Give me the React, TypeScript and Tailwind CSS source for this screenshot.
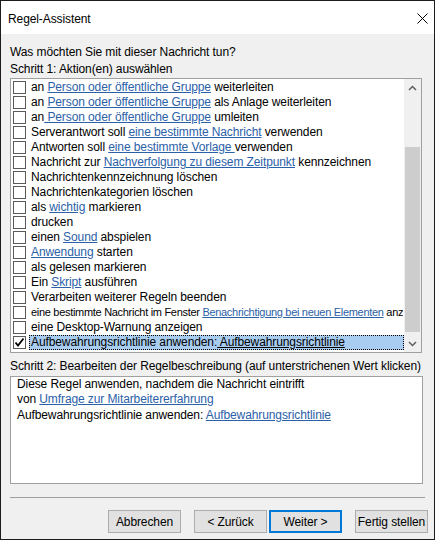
import type { ReactNode } from "react"

type Part = string | { link: string }

const rows: Part[][] = [
  ["an ", { link: "Person oder öffentliche Gruppe" }, " weiterleiten"],
  ["an ", { link: "Person oder öffentliche Gruppe" }, " als Anlage weiterleiten"],
  ["an", { link: " Person oder öffentliche Gruppe" }, " umleiten"],
  ["Serverantwort soll ", { link: "eine bestimmte Nachricht" }, " verwenden"],
  ["Antworten soll ", { link: "eine bestimmte Vorlage " }, "verwenden"],
  ["Nachricht zur ", { link: "Nachverfolgung zu diesem Zeitpunkt" }, " kennzeichnen"],
  ["Nachrichtenkennzeichnung löschen"],
  ["Nachrichtenkategorien löschen"],
  ["als ", { link: "wichtig" }, " markieren"],
  ["drucken"],
  ["einen ", { link: "Sound" }, " abspielen"],
  [{ link: "Anwendung" }, " starten"],
  ["als gelesen markieren"],
  ["Ein ", { link: "Skript" }, " ausführen"],
  ["Verarbeiten weiterer Regeln beenden"],
  ["eine bestimmte Nachricht im Fenster ", { link: "Benachrichtigung bei neuen Elementen" }, " anzeigen"],
  ["eine Desktop-Warnung anzeigen"],
  ["Aufbewahrungsrichtlinie anwenden:", { link: " Aufbewahrungsrichtlinie" }],
]

// row 15 is drawn condensed in the original dialog
const condensed = 15

function Text({ parts, selected }: { parts: Part[]; selected?: boolean }) {
  return (
    <>
      {parts.map((p, i) =>
        typeof p === "string" ? (
          <span key={i}>{p}</span>
        ) : (
          <span key={i} className={selected ? "underline text-black" : "underline text-[#2b61a8]"}>
            {p.link}
          </span>
        )
      )}
    </>
  )
}

function Checkbox({ checked }: { checked?: boolean }) {
  return (
    <div className="w-[13px] h-[13px] shrink-0 border border-[#5a5a5a] bg-white flex items-center justify-center">
      {checked && (
        <svg width="11" height="11" viewBox="0 0 11 11">
          <path d="M1.5 5.5 L4 8.5 L9.5 1.5" fill="none" stroke="#000" strokeWidth="1.8" />
        </svg>
      )}
    </div>
  )
}

function Button({ children, primary }: { children: ReactNode; primary?: boolean }) {
  return (
    <button
      className={
        "w-[73px] h-[23px] bg-[#e1e1e1] text-[12px] text-black whitespace-nowrap flex items-center justify-center " +
        (primary ? "border-2 border-[#0078d7]" : "border border-[#adadad]")
      }
    >
      {children}
    </button>
  )
}

function Chevron({ up }: { up?: boolean }) {
  return (
    <svg width="9" height="6" viewBox="0 0 9 6">
      <path
        d={up ? "M1 5 L4.5 1.5 L8 5" : "M1 1 L4.5 4.5 L8 1"}
        fill="none"
        stroke="#606060"
        strokeWidth="1.5"
      />
    </svg>
  )
}

export default function App() {
  return (
    <div
      className="w-[435px] h-[540px] border border-[#1c1c1c] bg-[#f0f0f0] flex flex-col text-[12px] tracking-[-0.1px] text-black whitespace-nowrap"
      style={{ fontFamily: '"Liberation Sans", Arial, sans-serif' }}
    >
      <div className="h-[33px] bg-white flex items-center justify-between pl-[7px] pr-[6px] pt-[2px] shrink-0">
        <span className="text-[12px]">Regel-Assistent</span>
        <svg width="11" height="11" viewBox="0 0 11 11">
          <path d="M0.5 0.5 L10.5 10.5 M10.5 0.5 L0.5 10.5" stroke="#000" strokeWidth="1" />
        </svg>
      </div>

      <div className="px-[9px] pt-[9px] flex flex-col">
        <div className="h-[18px] leading-[18px]">Was möchten Sie mit dieser Nachricht tun?</div>
        <div className="h-[17px] leading-[17px]">Schritt 1: Aktion(en) auswählen</div>

        <div className="w-[412px] h-[275px] border border-[#a0a0a0] bg-white flex">
          <div className="flex-1 min-w-0 pt-[1px] flex flex-col">
            {rows.map((r, i) => {
              const selected = i === rows.length - 1
              return (
                <div key={i} className="h-[15px] flex items-center pl-[2px]">
                  <Checkbox checked={selected} />
                  <div
                    className={
                      "ml-[3px] h-[15px] flex-1 min-w-0 overflow-hidden whitespace-nowrap leading-[13px] px-[1px] border " +
                      (selected ? "bg-[#a8cdf1] border-dotted border-black" : "border-transparent") +
                      (i === condensed ? " text-[11px] tracking-[-0.3px]" : "")
                    }
                  >
                    <Text parts={r} selected={selected} />
                  </div>
                </div>
              )
            })}
          </div>
          <div className="w-[17px] bg-[#f0f0f0] flex flex-col items-center">
            <div className="h-[17px] flex items-center justify-center">
              <Chevron up />
            </div>
            <div className="h-[51px]" />
            <div className="w-[15px] h-[185px] bg-[#cdcdcd]" />
            <div className="flex-1" />
            <div className="h-[17px] flex items-center justify-center">
              <Chevron />
            </div>
          </div>
        </div>

        <div className="mt-[5px] h-[17px] leading-[17px]">
          Schritt 2: Bearbeiten der Regelbeschreibung (auf unterstrichenen Wert klicken)
        </div>
        <div className="mt-[1px] w-[413px] h-[108px] border border-[#a0a0a0] bg-white pl-[6px] flex flex-col">
          <div className="h-[15px] leading-[15px]">Diese Regel anwenden, nachdem die Nachricht eintrifft</div>
          <div className="h-[15px] leading-[15px]">
            von <span className="underline text-[#2b61a8]">Umfrage zur Mitarbeitererfahrung</span>
          </div>
          <div className="h-[16px] leading-[16px]">
            Aufbewahrungsrichtlinie anwenden: <span className="underline text-[#2b61a8]">Aufbewahrungsrichtlinie</span>
          </div>
        </div>

        <div className="mt-[13px] h-px w-[415px] bg-[#a0a0a0]" />
      </div>

      <div className="mt-[12px] pr-[6px] flex justify-end">
        <Button>Abbrechen</Button>
        <div className="w-[13px]" />
        <Button>&lt; Zurück</Button>
        <div className="w-[2px]" />
        <Button primary>Weiter &gt;</Button>
        <div className="w-[13px]" />
        <Button>Fertig stellen</Button>
      </div>
    </div>
  )
}
